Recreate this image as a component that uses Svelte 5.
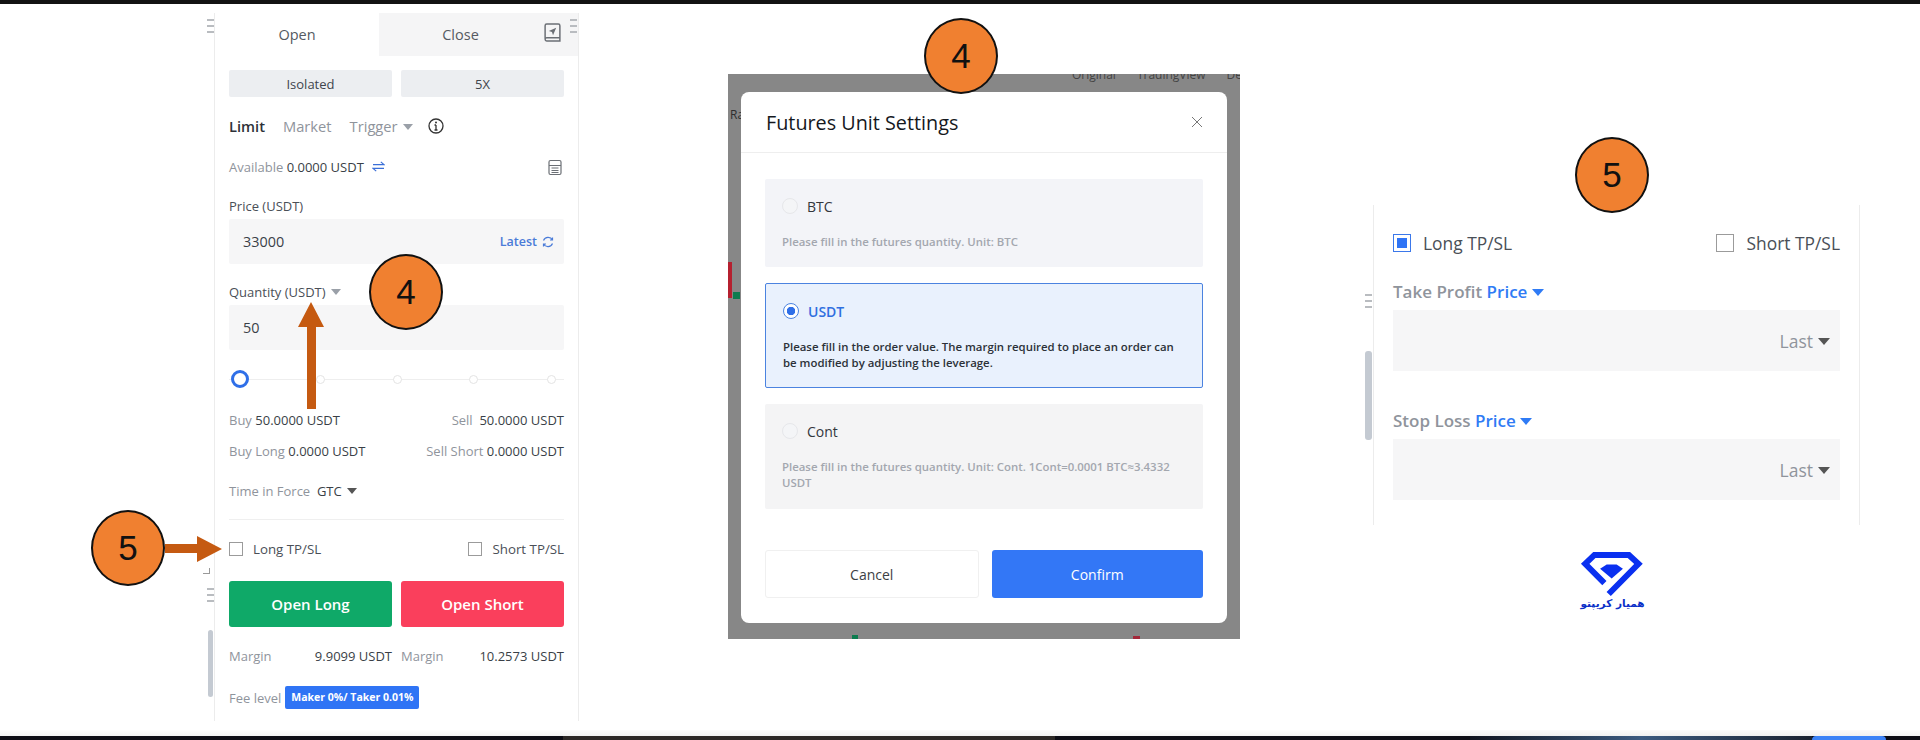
<script lang="ts">
	const units = [
		{ name: 'BTC', desc: 'Please fill in the futures quantity. Unit: BTC', on: false },
		{ name: 'USDT', desc: 'Please fill in the order value. The margin required to place an order can be modified by adjusting the leverage.', on: true },
		{ name: 'Cont', desc: 'Please fill in the futures quantity. Unit: Cont. 1Cont=0.0001 BTC≈3.4332 USDT', on: false }
	];
	const ticks = [0, 1, 2, 3, 4];
</script>

<div class="canvas">
	<div class="topbar"></div>

	<!-- left: order form -->
	<section class="window order">
		<div class="tabs">
			<div class="tab active">Open</div>
			<div class="tab">Close</div>
			<svg class="book" viewBox="0 0 18 18" aria-hidden="true">
				<path d="M2 15V2.5A1.5 1.5 0 0 1 3.5 1h11A1.5 1.5 0 0 1 16 2.5V17H3.5A1.5 1.5 0 0 1 2 15.5 1.5 1.5 0 0 1 3.5 14H16" />
				<path class="solid" d="M12.5 4.5 5.5 7.5l3 1 1 3z" />
			</svg>
		</div>
		<div class="form">
			<div class="mode">
				<div class="mode-btn">Isolated</div>
				<div class="mode-btn">5X</div>
			</div>
			<div class="types">
				<b>Limit</b>
				<span class="muted">Market</span>
				<span class="muted">Trigger <i class="caret gray"></i></span>
				<svg class="info" viewBox="0 0 16 16" aria-hidden="true">
					<circle cx="8" cy="8" r="7" />
					<path d="M8 7v5M6.5 12h3M6.5 7H8" />
					<circle class="solid" cx="8" cy="4.4" r="1" />
				</svg>
			</div>
			<div class="row avail">
				<span><span class="muted">Available</span> 0.0000 USDT
					<svg class="swap" viewBox="0 0 14 12" aria-hidden="true">
						<path d="M1 4h12L9.500 1M13 8H1l3.500 3" />
					</svg>
				</span>
				<svg class="calc" viewBox="0 0 14 16" aria-hidden="true">
					<rect x="1" y="1" width="12" height="14" rx="1.500" />
					<path d="M1 6h12M3.500 8.500h7M3.500 11h7M3.500 13h7" />
				</svg>
			</div>
			<div class="label">Price (USDT)</div>
			<div class="input">
				<span>33000</span>
				<span class="latest">Latest
					<svg viewBox="0 0 12 12" aria-hidden="true"><path d="M10.500 4A5 5 0 0 0 1.500 4.500M1.500 8a5 5 0 0 0 9-.5M10.500 1.500V4H8M1.500 10.500V8H4" /></svg>
				</span>
			</div>
			<div class="label qty">Quantity (USDT) <i class="caret gray"></i></div>
			<div class="input"><span>50</span></div>
			<div class="slider">
				{#each ticks as t}
					<span class="tick" class:first={t === 0}></span>
				{/each}
			</div>
			<div class="row stat first"><span><span class="muted">Buy</span> 50.0000 USDT</span><span><span class="muted">Sell</span>&nbsp; 50.0000 USDT</span></div>
			<div class="row stat"><span><span class="muted">Buy Long</span> 0.0000 USDT</span><span><span class="muted">Sell Short</span> 0.0000 USDT</span></div>
			<div class="tif"><span class="muted">Time in Force</span>&nbsp; GTC <i class="caret dark"></i></div>
			<hr />
			<div class="row checks">
				<label class="check"><span class="box"></span>Long TP/SL</label>
				<label class="check"><span class="box"></span>Short TP/SL</label>
			</div>
			<div class="actions">
				<div class="act long">Open Long</div>
				<div class="act short">Open Short</div>
			</div>
			<div class="margins">
				<div class="row"><span class="muted">Margin</span><span>9.9099 USDT</span></div>
				<div class="row"><span class="muted">Margin</span><span>10.2573 USDT</span></div>
			</div>
			<div class="fee"><span class="muted">Fee level</span><span class="badge">Maker 0%/ Taker 0.01%</span></div>
		</div>
	</section>
	<div class="grip g1"><i></i><i></i><i></i></div>
	<div class="grip g2"><i></i><i></i><i></i></div>
	<div class="grip g3"><i></i><i></i><i></i></div>
	<div class="corner"></div>
	<div class="scroll s1"></div>

	<!-- middle: settings dialog over the dimmed page -->
	<section class="window overlay">
		<div class="behind tabsback"><span>Original</span><span>TradingView</span><span>Dep</span></div>
		<span class="behind ra">Ra</span>
		<span class="candle c1"></span>
		<span class="candle c2"></span>
		<span class="candle c3"></span>
		<span class="candle c4"></span>
		<div class="dialog">
			<header>
				<h2>Futures Unit Settings</h2>
				<svg class="close" viewBox="0 0 12 12" aria-hidden="true"><path d="M1 1l10 10M11 1 1 11" /></svg>
			</header>
			<div class="units">
				{#each units as u}
					<div class="unit" class:on={u.on}>
						<div class="unit-head"><span class="radio"></span>{u.name}</div>
						<p>{u.desc}</p>
					</div>
				{/each}
			</div>
			<footer>
				<div class="btn cancel">Cancel</div>
				<div class="btn confirm">Confirm</div>
			</footer>
		</div>
	</section>

	<!-- right: TP/SL detail -->
	<section class="window tpsl">
		<div class="row checks big">
			<label class="check"><span class="box checked"></span>Long TP/SL</label>
			<label class="check"><span class="box"></span>Short TP/SL</label>
		</div>
		<div class="tp-label first">Take Profit <em>Price</em> <i class="caret blue"></i></div>
		<div class="tp-input">Last <i class="caret dark"></i></div>
		<div class="tp-label">Stop Loss <em>Price</em> <i class="caret blue"></i></div>
		<div class="tp-input">Last <i class="caret dark"></i></div>
	</section>
	<div class="grip g4"><i></i><i></i><i></i></div>
	<div class="scroll s2"></div>

	<div class="logo">
		<svg viewBox="60 30 195 145" aria-hidden="true">
			<path class="ring" d="M146 163 236 72 207 45H103L75 72l58 58" />
			<path class="gem" d="M120 87 140 74h30l19 13-34 29z" />
		</svg>
		<span>همیار کریپتو</span>
	</div>

	<!-- annotations -->
	<div class="marker m1">4</div>
	<div class="marker m2">4</div>
	<div class="marker m3">5</div>
	<div class="marker m4">5</div>
	<svg class="arrows" viewBox="0 0 1920 740" aria-hidden="true">
		<path d="M311 302 324 327H316V409H307V327H298z" />
		<path d="M222 549 197 536V544H165V553H197V562z" />
	</svg>

	<div class="bottom">
		<div class="fade"></div>
		<div class="taskbar">
			<span class="seg"></span>
			<span class="glow"></span>
			<span class="dot"></span>
		</div>
	</div>
</div>

<style>
	:global(body) {
		margin: 0;
		background: #fff;
	}

	.canvas {
		position: relative;
		width: 1920px;
		height: 740px;
		overflow: hidden;
		background: #fff;
		font-family: 'Open Sans', 'Noto Sans', sans-serif;
		font-size: 13px;
		color: #3a3f47;
	}

	.topbar {
		height: 4px;
		background: #121212;
	}

	.window {
		position: absolute;
		box-sizing: border-box;
	}

	.row {
		display: flex;
		justify-content: space-between;
		align-items: center;
	}

	.muted {
		color: #8f949c;
	}

	.caret {
		display: inline-block;
		width: 0;
		height: 0;
		margin-left: 2px;
		vertical-align: 2px;
		border-left: 5px solid transparent;
		border-right: 5px solid transparent;
		border-top: 6px solid #9aa0a8;
	}
	.caret.dark {
		border-top-color: #555;
	}
	.caret.blue {
		border-top-color: #2f7bf5;
	}

	/* order form */
	.order {
		left: 214px;
		top: 13px;
		width: 365px;
		height: 708px;
		border-left: 1px solid #ececec;
		border-right: 1px solid #ececec;
	}

	.tabs {
		position: relative;
		display: flex;
		height: 43px;
	}

	.tab {
		flex: 0 0 164px;
		display: flex;
		align-items: center;
		justify-content: center;
		font-size: 14.500px;
		color: #555a62;
	}
	.tab:nth-child(2) {
		flex: 1;
		padding-right: 36px;
		background: #f5f5f6;
	}

	.book {
		position: absolute;
		left: 328px;
		top: 10px;
		width: 19px;
		height: 19px;
		fill: none;
		stroke: #6b6f75;
		stroke-width: 1.400;
	}
	.solid {
		fill: #6b6f75;
		stroke: none;
	}

	.form {
		padding: 14px 14px 0 14px;
	}

	.mode {
		display: flex;
		gap: 9px;
	}
	.mode-btn {
		flex: 1;
		height: 27px;
		display: flex;
		align-items: center;
		justify-content: center;
		background: #eceef1;
		color: #40454d;
		border-radius: 2px;
	}

	.types {
		display: flex;
		align-items: center;
		gap: 18px;
		height: 30px;
		margin-top: 14px;
		font-size: 14.700px;
	}
	.types b {
		font-weight: 600;
		color: #2d3138;
	}

	.info {
		width: 16px;
		height: 16px;
		margin-left: -3px;
		fill: none;
		stroke: #333;
		stroke-width: 1.300;
	}
	.info .solid {
		fill: #333;
	}

	.avail {
		height: 24px;
		margin-top: 14px;
	}
	.swap {
		width: 13px;
		height: 11px;
		margin-left: 5px;
		fill: none;
		stroke: #3b6fd8;
		stroke-width: 1.300;
	}
	.calc {
		width: 14px;
		height: 17px;
		margin-right: 2px;
		fill: none;
		stroke: #6b6f75;
		stroke-width: 1.200;
	}

	.label {
		height: 20px;
		line-height: 20px;
		margin-top: 17px;
		color: #4a4f57;
	}
	.label.qty {
		margin-top: 18px;
	}

	.input {
		display: flex;
		justify-content: space-between;
		align-items: center;
		height: 45px;
		margin-top: 3px;
		padding: 0 10px 0 14px;
		background: #f6f6f7;
		font-size: 14.400px;
		border-radius: 2px;
	}
	.latest {
		display: flex;
		align-items: center;
		gap: 5px;
		font-size: 12.500px;
		font-weight: 600;
		color: #4a7bd8;
	}
	.latest svg {
		width: 12px;
		height: 12px;
		fill: none;
		stroke: #4a7bd8;
		stroke-width: 1.200;
	}

	.slider {
		display: flex;
		justify-content: space-between;
		align-items: center;
		height: 12px;
		margin-top: 23px;
		padding: 0 7px 0 3px;
		background: linear-gradient(#eee, #eee) center / 100% 1px no-repeat;
	}
	.tick {
		box-sizing: border-box;
		width: 9px;
		height: 9px;
		background: #fff;
		border: 1.500px solid #e4e4e4;
		border-radius: 50%;
		transform: translateX(-2px);
	}
	.tick.first {
		width: 18px;
		height: 18px;
		border: 3.500px solid #2f6fe8;
		transform: translateX(-1px);
	}
	.tick:last-child {
		transform: translateX(-1px);
	}

	.stat {
		height: 20px;
		margin-top: 11px;
	}
	.stat.first {
		margin-top: 25px;
	}

	.tif {
		height: 20px;
		margin-top: 21px;
	}

	hr {
		height: 1px;
		margin: 17px 0 0;
		border: 0;
		background: #efefef;
	}

	.checks {
		height: 22px;
		margin-top: 18px;
	}
	.check {
		display: flex;
		align-items: center;
		gap: 10px;
		font-size: 13.300px;
		color: #4a4f57;
	}
	.box {
		box-sizing: border-box;
		width: 14px;
		height: 14px;
		border: 1px solid #9b9b9b;
	}

	.actions {
		display: flex;
		gap: 9px;
		margin-top: 21px;
	}
	.act {
		flex: 1;
		height: 46px;
		display: flex;
		align-items: center;
		justify-content: center;
		color: #fff;
		font-size: 15px;
		font-weight: 600;
		border-radius: 3px;
	}
	.long {
		background: #0fa968;
	}
	.short {
		background: #fa3f5c;
	}

	.margins {
		display: grid;
		grid-template-columns: 1fr 1fr;
		gap: 9px;
		height: 20px;
		margin-top: 19px;
	}

	.fee {
		display: flex;
		align-items: center;
		gap: 4px;
		margin-top: 20px;
	}
	.badge {
		padding: 0 6px;
		height: 23px;
		line-height: 23px;
		background: #2f74f5;
		color: #fff;
		font-size: 10.500px;
		font-weight: 700;
		border-radius: 2px;
	}

	.grip {
		position: absolute;
		display: flex;
		flex-direction: column;
		gap: 4px;
		width: 7px;
	}
	.grip i {
		height: 2px;
		background: #b9bcc0;
	}
	.g1 { left: 207px; top: 19px; }
	.g2 { left: 570px; top: 19px; }
	.g3 { left: 207px; top: 588px; }
	.g4 { left: 1365px; top: 294px; }

	.corner {
		position: absolute;
		left: 203px;
		top: 568px;
		width: 6px;
		height: 5px;
		border-right: 1px solid #999;
		border-bottom: 1px solid #999;
	}

	.scroll {
		position: absolute;
		background: #c4cad2;
		border-radius: 3px;
	}
	.s1 { left: 208px; top: 630px; width: 5px; height: 67px; }
	.s2 { left: 1365px; top: 351px; width: 7px; height: 89px; }

	/* dialog */
	.overlay {
		left: 728px;
		top: 74px;
		width: 512px;
		height: 565px;
		padding: 18px 13px 16px;
		overflow: hidden;
		background: #878787;
	}

	.behind {
		position: absolute;
		color: #2e2e2e;
	}
	.tabsback {
		left: 344px;
		top: -8px;
		display: flex;
		gap: 21px;
		font-size: 12px;
		color: #444;
	}
	.ra {
		left: 2px;
		top: 32px;
		font-size: 12px;
	}
	.candle {
		position: absolute;
		width: 4px;
	}
	.c1 { left: 0; top: 188px; height: 36px; background: #b5202f; }
	.c2 { left: 5px; top: 218px; height: 7px; width: 7px; background: #0d7c4f; }
	.c3 { left: 124px; top: 561px; width: 6px; height: 4px; background: #0d7c4f; }
	.c4 { left: 405px; top: 562px; width: 7px; height: 3px; background: #a3283a; }

	.dialog {
		position: relative;
		display: flex;
		flex-direction: column;
		height: 531px;
		background: #fff;
		border-radius: 8px;
	}

	header {
		display: flex;
		justify-content: space-between;
		align-items: center;
		height: 60px;
		padding: 0 24px 0 25px;
		border-bottom: 1px solid #eeeeee;
	}
	h2 {
		margin: 0;
		font-size: 19.800px;
		font-weight: 500;
		color: #15181d;
	}
	.close {
		width: 12px;
		height: 12px;
		fill: none;
		stroke: #777;
		stroke-width: 1;
	}

	.units {
		display: flex;
		flex-direction: column;
		gap: 16px;
		margin: 26px 24px 0;
	}
	.unit {
		box-sizing: border-box;
		min-height: 88px;
		padding: 15px 17px 0;
		background: #f3f4f8;
		border-radius: 2px;
	}
	.unit:last-child {
		height: 105px;
		background: #f4f4f5;
	}
	.unit.on {
		height: 105px;
		background: #e9f1fd;
		border: 1px solid #4b83e0;
	}
	.unit-head {
		display: flex;
		align-items: center;
		gap: 9px;
		height: 24px;
		font-size: 14px;
		color: #33373d;
	}
	.on .unit-head {
		color: #2f6fe0;
		font-weight: 600;
	}
	.radio {
		box-sizing: border-box;
		width: 16px;
		height: 16px;
		border: 1px solid #e6e7ea;
		border-radius: 50%;
		background: #f4f5f7;
	}
	.on .radio {
		border: 1.500px solid #4b83e0;
		background: radial-gradient(circle, #2f6fe8 0 4px, #fff 4.500px);
	}
	.unit p {
		margin: 16px 0 0;
		font-size: 11.400px;
		line-height: 16px;
		font-weight: 600;
		color: #a3a7af;
	}
	.unit.on p {
		color: #2c3138;
	}

	footer {
		display: flex;
		gap: 13px;
		margin: 41px 24px 0;
	}
	.btn {
		flex: 1;
		height: 48px;
		display: flex;
		align-items: center;
		justify-content: center;
		font-size: 14px;
		border-radius: 3px;
	}
	.cancel {
		box-sizing: border-box;
		border: 1px solid #f0f0f0;
		color: #3c3f44;
	}
	.confirm {
		background: #3377f6;
		color: #fff;
	}

	/* TP/SL detail */
	.tpsl {
		left: 1373px;
		top: 205px;
		width: 487px;
		height: 320px;
		padding: 27px 19px 0 19px;
		border-left: 1px solid #ececec;
		border-right: 1px solid #ececec;
	}
	.checks.big {
		margin: 0;
	}
	.big .check {
		gap: 12px;
		font-size: 17.400px;
	}
	.big .box {
		width: 18px;
		height: 18px;
	}
	.box.checked {
		border: 1.500px solid #3b78ea;
		background: linear-gradient(#2f74f5, #2f74f5) center / 10px 10px no-repeat;
	}

	.tp-label {
		height: 24px;
		margin-top: 38px;
		line-height: 24px;
		font-size: 17px;
		font-weight: 600;
		color: #8f949c;
	}
	.tp-label.first {
		margin-top: 26px;
	}
	.tp-label em {
		font-style: normal;
		color: #2f7bf5;
	}
	.tp-label .caret {
		border-left-width: 6px;
		border-right-width: 6px;
		border-top-width: 7px;
		margin-left: 0;
	}
	.tp-input {
		display: flex;
		align-items: center;
		justify-content: flex-end;
		gap: 3px;
		height: 60px;
		margin-top: 6px;
		padding: 1px 10px 0;
		background: #f6f6f7;
		font-size: 17.500px;
		color: #8f949c;
	}
	.tp-input .caret {
		border-left-width: 6px;
		border-right-width: 6px;
		border-top-width: 7px;
	}

	.logo {
		position: absolute;
		left: 1580px;
		top: 550px;
		display: flex;
		flex-direction: column;
		align-items: center;
		width: 65px;
	}
	.logo svg {
		width: 65px;
		height: 48px;
	}
	.ring {
		fill: none;
		stroke: #0a30f0;
		stroke-width: 18;
	}
	.gem {
		fill: #0a30f0;
	}
	.logo span {
		margin-top: -1px;
		font-family: 'DejaVu Sans', sans-serif;
		font-size: 10.500px;
		font-weight: 700;
		line-height: 12px;
		color: #0a30c8;
		white-space: nowrap;
	}

	.marker {
		position: absolute;
		box-sizing: border-box;
		width: 74px;
		height: 76px;
		display: flex;
		align-items: center;
		justify-content: center;
		background: #f08030;
		border: 2px solid #111;
		border-radius: 50%;
		font-family: 'Liberation Sans', sans-serif;
		font-size: 35px;
		color: #111;
	}
	.m1 { left: 924px; top: 18px; }
	.m2 { left: 369px; top: 254px; }
	.m3 { left: 91px; top: 510px; }
	.m4 { left: 1575px; top: 137px; }

	.arrows {
		position: absolute;
		inset: 0;
		width: 1920px;
		height: 740px;
		fill: #c55a11;
		pointer-events: none;
	}

	.bottom {
		position: absolute;
		left: 0;
		right: 0;
		bottom: 0;
		height: 10px;
		display: flex;
		flex-direction: column;
	}
	.fade {
		flex: 1;
		background: linear-gradient(#fbfbfb, #f0f0f0);
	}
	.taskbar {
		position: relative;
		height: 4px;
		background: #0a0a12;
	}
	.seg {
		position: absolute;
		left: 563px;
		width: 492px;
		top: 0;
		bottom: 0;
		background: #2a2624;
	}
	.glow {
		position: absolute;
		left: 1470px;
		width: 342px;
		top: 0;
		bottom: 0;
		background: linear-gradient(90deg, #10141f, #3b5a80 50%, #1a2230);
	}
	.dot {
		position: absolute;
		left: 1812px;
		width: 74px;
		top: 0;
		bottom: 0;
		background: #3b82f6;
		border-radius: 20px 20px 0 0;
	}
</style>
